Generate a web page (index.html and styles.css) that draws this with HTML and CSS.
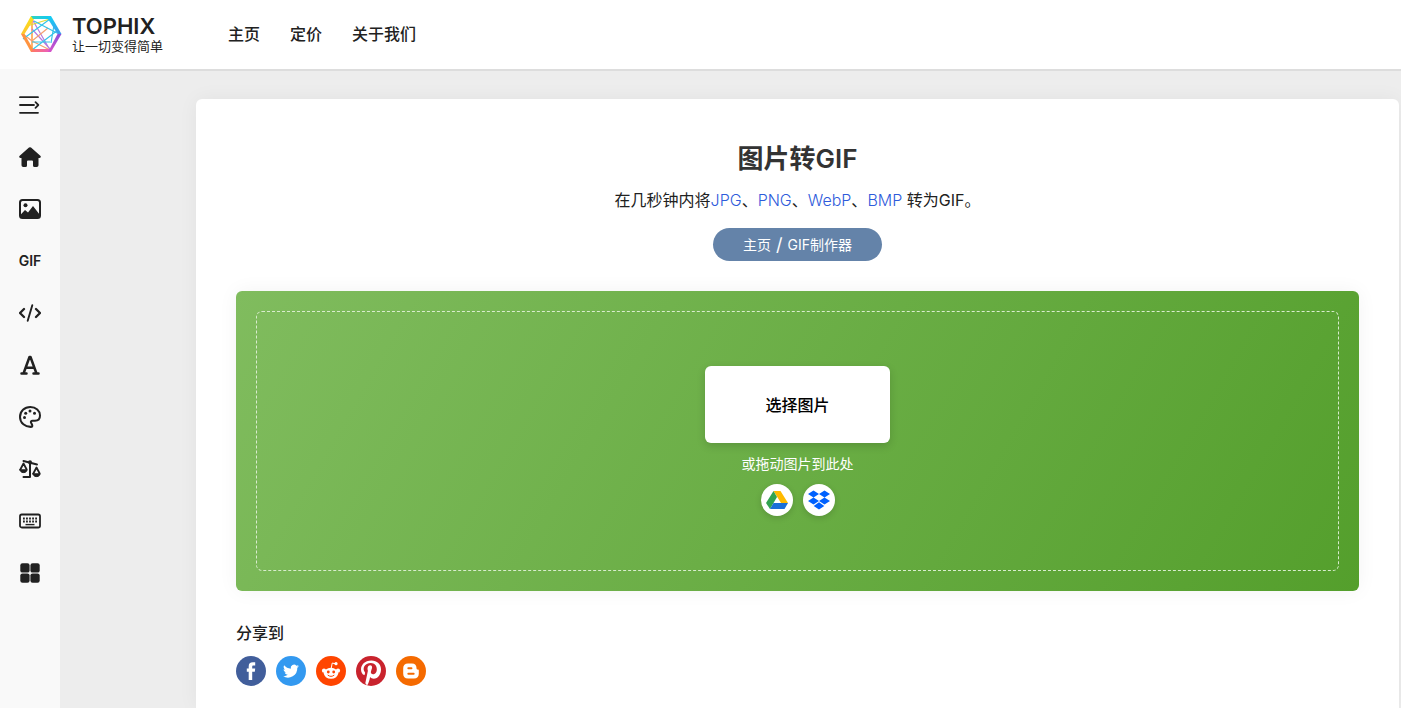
FILE: index.html
```html
<!DOCTYPE html>
<html lang="zh-CN">
  <head>
    <meta charset="utf-8">
    <meta name="viewport" content="width=device-width, initial-scale=1">
    <title>图片转GIF</title>
    <link rel="stylesheet" href="styles.css">
  </head>

  <body>
    <header class="header">
      <a class="brand" href="#">
        <svg class="brand-logo" viewBox="0 0 42 38" fill="none">
          <defs>
            <linearGradient id="g1" x1="0" y1="0" x2="1" y2="0"><stop stop-color="#2fd3c3"/><stop offset="1" stop-color="#12c8f4"/></linearGradient>
            <linearGradient id="g2" x1="0" y1="0" x2="0" y2="1"><stop stop-color="#12d0f4"/><stop offset="1" stop-color="#3f9cec"/></linearGradient>
            <linearGradient id="g3" x1="0" y1="0" x2="0" y2="1"><stop stop-color="#8a50dc"/><stop offset="1" stop-color="#d853c8"/></linearGradient>
            <linearGradient id="g4" x1="0" y1="0" x2="1" y2="0"><stop stop-color="#ff7a60"/><stop offset="1" stop-color="#e95bc5"/></linearGradient>
            <linearGradient id="g5" x1="0" y1="0" x2="0" y2="1"><stop stop-color="#f8e31c"/><stop offset="1" stop-color="#ffc42c"/></linearGradient>
          </defs>
          <g stroke-width="1.200">
            <path d="M12 4v30" stroke="#ff9b3f" stroke-width="1.500"/>
            <path d="M12 4l18 31M12 14l18 20" stroke="#b57be0"/>
            <path d="M7 11L30 4" stroke="#e2da35"/>
            <path d="M3 19L12 26l18 9M12 26l16-13" stroke="#f5a070"/>
            <path d="M30 4L3 24M38 15L12 35M34 10l-3 18M12 27h18M14 6l23 12" stroke="#36c4e8"/>
          </g>
          <path d="M11 1h3v3L4.500 19H1z" fill="url(#g5)"/>
          <path d="M1 19h3.500L13 34v3h-2z" fill="#ff9440"/>
          <path d="M11 37l1-3h18l1 3z" fill="url(#g4)"/>
          <path d="M11 1h20l-1 3H13z" fill="url(#g1)"/>
          <path d="M28 1h3l10.500 18h-4L28 4z" fill="url(#g2)"/>
          <path d="M37.500 19h4L31 37h-3z" fill="url(#g3)"/>
        </svg>
        <span class="brand-text">
          <span class="brand-name">TOPHIX</span>
          <span class="brand-slogan">让一切变得简单</span>
        </span>
      </a>
      <nav class="nav">
        <a href="#">主页</a>
        <a href="#">定价</a>
        <a href="#">关于我们</a>
      </nav>
    </header>

    <div class="layout">
      <aside class="sidebar">
        <button type="button" class="side-item" aria-label="展开菜单">
          <svg viewBox="0 0 22 22" fill="none" stroke="currentColor" stroke-width="1.800" stroke-linecap="round" stroke-linejoin="round"><path d="M1 3.200h18M1 18.800h18M1 11h14M16.500 8.200l2.800 2.800-2.800 2.800"/></svg>
        </button>
        <a class="side-item" href="#" aria-label="主页">
          <svg viewBox="0 0 22 22" fill="currentColor"><path d="M10 1.600a1.500 1.500 0 0 1 2 0l9.300 8.200c1 .9.500 2.200-.8 2.200h-1v7.200a1.800 1.800 0 0 1-1.800 1.800h-2.200a1.500 1.500 0 0 1-1.500-1.500V15.500a1 1 0 0 0-1-1H9a1 1 0 0 0-1 1v4A1.500 1.500 0 0 1 6.500 21H4.300a1.800 1.800 0 0 1-1.800-1.800V12h-1C.2 12-.3 10.700.7 9.800z"/></svg>
        </a>
        <a class="side-item" href="#" aria-label="图片">
          <svg viewBox="0 0 22 22" fill="currentColor"><rect x="1" y="2" width="20" height="18" rx="2.500" fill="none" stroke="currentColor" stroke-width="2"/><circle cx="6.500" cy="7.300" r="2"/><path d="M2 19v-2.700L6 12l3 2.500L14 8l6 7.800V19z"/></svg>
        </a>
        <a class="side-item side-label" href="#">GIF</a>
        <a class="side-item" href="#" aria-label="代码">
          <svg viewBox="0 0 22 22" fill="none" stroke="currentColor" stroke-width="2.300" stroke-linecap="round" stroke-linejoin="round"><path d="M5 7l-4 4 4 4M17 7l4 4-4 4"/><path d="M13.300 3.200L8.700 18.800" stroke-width="1.900"/></svg>
        </a>
        <a class="side-item" href="#" aria-label="字体">
          <svg viewBox="0 0 22 22" fill="none" stroke="currentColor" stroke-width="2.500" stroke-linecap="round" stroke-linejoin="round"><path d="M2.500 19.500h5M14.500 19.500h5M4.700 19L10.500 3h1l5.800 16M7 13.800h8"/></svg>
        </a>
        <a class="side-item" href="#" aria-label="颜色">
          <svg viewBox="0 0 22 22" fill="currentColor"><path d="M13 20.800C6 21.500 1 16.800 1 11S5.500 1 11.300 1C17 1 21 4.800 21 9.500c0 3.600-2.400 5.200-5 5.200h-2.500c-1.500 0-2 1.300-1.300 2.300.9 1.300 1.700 2.400.8 3.800z" fill="none" stroke="currentColor" stroke-width="2" stroke-linejoin="round"/><circle cx="5.500" cy="11.500" r="1.500"/><circle cx="6.700" cy="7.200" r="1.500"/><circle cx="11" cy="5" r="1.500"/><circle cx="15.500" cy="7.200" r="1.500"/></svg>
        </a>
        <a class="side-item" href="#" aria-label="对比">
          <svg viewBox="0 0 22 22" fill="none" stroke="currentColor" stroke-width="2" stroke-linecap="round" stroke-linejoin="round"><path d="M4.500 3L18 6.500M11 5v14M4.500 19H11"/><circle cx="11" cy="4.300" r="2" fill="currentColor" stroke="none"/><path d="M1.300 11.500L4.500 5.500l3.200 6M14.300 15.500l3.200-6 3.200 6" stroke-width="1.800"/><path d="M1 11.800h7c0 3.800-7 3.800-7 0zM14 15.800h7c0 3.800-7 3.800-7 0z" fill="currentColor" stroke-width="1"/></svg>
        </a>
        <a class="side-item" href="#" aria-label="键盘">
          <svg viewBox="0 0 22 22" fill="none" stroke="currentColor" stroke-width="1.800"><rect x="1" y="4.500" width="20" height="13" rx="1.800"/><path d="M4 8.500h14M4 11.500h14" stroke-dasharray="1.800 1.250"/><path d="M6.500 14.600h9" stroke-width="1.400"/></svg>
        </a>
        <a class="side-item" href="#" aria-label="更多工具">
          <svg viewBox="0 0 22 22" fill="currentColor"><rect x="1.300" y="1.300" width="9.300" height="9.300" rx="2.200"/><rect x="11.400" y="1.300" width="9.300" height="9.300" rx="2.200"/><rect x="1.300" y="11.400" width="9.300" height="9.300" rx="2.200"/><rect x="11.400" y="11.400" width="9.300" height="9.300" rx="2.200"/></svg>
        </a>
      </aside>

      <main class="main">
        <section class="card">
          <h1>图片转GIF</h1>
          <p class="intro">在几秒钟内将<a href="#">JPG</a>、<a href="#">PNG</a>、<a href="#">WebP</a>、<a href="#">BMP</a> 转为GIF。</p>
          <nav class="crumbs">
            <a href="#">主页</a>
            <span class="slash">/</span>
            <a href="#">GIF制作器</a>
          </nav>

          <div class="upload">
            <div class="dropzone">
              <button type="button" class="select-btn">选择图片</button>
              <p class="hint">或拖动图片到此处</p>
              <div class="clouds">
                <button type="button" class="cloud" aria-label="Google Drive">
                  <svg viewBox="0 0 22 20"><path d="M7.500 1h7L22 13h-7z" fill="#ffba00"/><path d="M7.500 1L11 7 4 19 0 13z" fill="#32a350"/><path d="M7.500 13H22l-3.500 6H4z" fill="#1b6fd8"/></svg>
                </button>
                <button type="button" class="cloud" aria-label="Dropbox">
                  <svg viewBox="0 0 22 20" fill="#0061fe"><path d="M5.500.5L11 4 5.500 7.500 0 4zM16.500.5L22 4l-5.500 3.500L11 4zM5.500 7.500L11 11l-5.500 3.500L0 11zM16.500 7.500L22 11l-5.500 3.500L11 11zM11 12.300l5.300 3.600L11 19.500l-5.300-3.600z"/></svg>
                </button>
              </div>
            </div>
          </div>

          <h2>分享到</h2>
          <div class="share">
            <a href="#" aria-label="Facebook">
              <svg viewBox="0 0 30 30"><circle cx="15" cy="15" r="15" fill="#415e9b"/><path d="M12.700 24v-8.200H10.800v-3.200h1.900v-2.100c0-2.900 1.300-4.200 4.200-4.200h2.300v3.200h-1.600c-1.100 0-1.400.5-1.400 1.400v1.700h3l-.4 3.200h-2.600V24z" fill="#fff"/></svg>
            </a>
            <a href="#" aria-label="Twitter">
              <svg viewBox="0 0 30 30"><circle cx="15" cy="15" r="15" fill="#3399f0"/><path d="M23 10.200c-.6.300-1.200.4-1.900.5.700-.4 1.200-1 1.400-1.800-.6.400-1.300.6-2.100.8a3.300 3.300 0 0 0-5.600 3c-2.700-.1-5.100-1.400-6.700-3.400-.9 1.600-.4 3.400 1 4.300-.5 0-1-.1-1.500-.4 0 1.600 1.100 2.900 2.600 3.200-.5.100-.9.200-1.500.1.400 1.300 1.600 2.200 3.100 2.200-1.400 1.100-3 1.600-4.800 1.400a9.300 9.300 0 0 0 14.300-8.300c.7-.4 1.300-1 1.700-1.600z" fill="#fff"/></svg>
            </a>
            <a href="#" aria-label="Reddit">
              <svg viewBox="0 0 30 30"><circle cx="15" cy="15" r="15" fill="#ff4500"/><g fill="#fff"><ellipse cx="15" cy="17.300" rx="7.200" ry="5.500"/><circle cx="8" cy="14.700" r="2.100"/><circle cx="22" cy="14.700" r="2.100"/><circle cx="20" cy="7.700" r="1.600"/></g><path d="M15.300 12l.9-4.900 3.800.7" fill="none" stroke="#fff"/><circle cx="12.300" cy="16" r="1.400" fill="#ff4500"/><circle cx="17.700" cy="16" r="1.400" fill="#ff4500"/><path d="M12 19.300c1.700 1.500 4.300 1.500 6 0" fill="none" stroke="#ff4500" stroke-linecap="round"/></svg>
            </a>
            <a href="#" aria-label="Pinterest">
              <svg viewBox="0 0 30 30"><circle cx="15" cy="15" r="15" fill="#c9232d"/><path d="M15.500 4.500C8.500 4.500 5 9 5 13.500c0 2.200 1.100 4.700 3 5.600.4.100.5.100.6-.3l.5-1.900-.2-.6c-2.900-3.700-.5-9.300 6-9.300 7.400 0 7.700 11.300 2.100 11.300-1.400 0-2.400-1.100-2.100-2.500.4-1.800 1.200-3.400 1.200-4.600 0-3.100-4.600-2.600-4.600 1.400 0 1.200.4 2.100.4 2.100L9.300 27.200l1.800 2.300c1.800-2.400 2.400-5.600 3-8.400.8 1.200 2.200 1.700 3.500 1.700 4.800 0 7.400-4.700 7.400-9.500 0-5.200-4-8.800-9.500-8.800z" fill="#fff"/></svg>
            </a>
            <a href="#" aria-label="Blogger">
              <svg viewBox="0 0 30 30"><circle cx="15" cy="15" r="15" fill="#f56a00"/><path d="M12 7.500h4c3 0 4.500 2 4.500 4.400 0 1.300.5 1.600 1.300 1.600.7 0 1 .4 1 1v3.300c0 3-1.700 4.700-4.800 4.700h-6c-3.200 0-4.800-1.700-4.800-4.700v-5.600c0-3 1.800-4.700 4.800-4.700z" fill="#fff"/><path d="M12.300 12.300h3.200M12.300 17.800h5.400" stroke="#f56a00" stroke-width="1.900" stroke-linecap="round"/></svg>
            </a>
          </div>
        </section>
      </main>
    </div>
  </body>
</html>
```

FILE: styles.css
```css
* {
  box-sizing: border-box;
  margin: 0;
  padding: 0;
}

body {
  display: flex;
  flex-direction: column;
  min-height: 100vh;
  background: #ededed;
  color: #212121;
  font-family: Inter, "Noto Sans CJK SC", sans-serif;
  font-size: 16px;
  line-height: 24px;
}

a {
  color: inherit;
  text-decoration: none;
}

button {
  border: 0;
  background: none;
  color: inherit;
  font: inherit;
  cursor: pointer;
}

svg {
  display: block;
}

/* header */
.header {
  display: flex;
  align-items: center;
  gap: 65px;
  height: 69px;
  padding: 0 20px 2px;
  background: #fff;
}

.brand {
  display: flex;
  align-items: center;
  gap: 10px;
}

.brand-logo {
  width: 42px;
  height: 38px;
}

.brand-text {
  display: flex;
  flex-direction: column;
  padding-top: 4px;
}

.brand-name {
  font-size: 22px;
  font-weight: 600;
  line-height: 20px;
}

.brand-slogan {
  font-size: 13px;
  line-height: 20px;
}

.nav {
  display: flex;
  gap: 30px;
  font-weight: 500;
}

/* page body */
.layout {
  display: flex;
  flex: 1;
}

.sidebar {
  width: 60px;
  padding-top: 10px;
  background: #f9f9f9;
}

.side-item {
  display: flex;
  align-items: center;
  justify-content: center;
  width: 60px;
  height: 52px;
}

.side-item svg {
  width: 22px;
  height: 22px;
}

.side-label {
  font-size: 14px;
  font-weight: 600;
}

.main {
  display: flex;
  flex: 1;
  padding: 28px 2px 0 136px;
  border-top: 2px solid #ddd;
}

.card {
  flex: 1;
  padding: 40px 40px 20px;
  border-radius: 6px 6px 0 0;
  background: #fff;
  box-shadow: 0 0 20px rgba(0, 0, 0, 0.05);
  text-align: center;
}

h1 {
  margin-bottom: 10px;
  color: #333;
  font-size: 26px;
  font-weight: 600;
  line-height: 39px;
}

.intro {
  margin-bottom: 16px;
}

.intro a {
  color: #2e5bdb;
  font-weight: 300;
}

.crumbs {
  display: inline-flex;
  align-items: center;
  gap: 5px;
  height: 33px;
  padding: 0 30px;
  border-radius: 17px;
  background: #6483a9;
  color: #fff;
  font-size: 14px;
  vertical-align: top;
}

.slash {
  font-size: 18px;
}

/* upload area */
.upload {
  margin: 30px 0;
  padding: 20px;
  border-radius: 6px;
  background: linear-gradient(120deg, #80bc5e, #549f2c);
  box-shadow: 0 0 20px rgba(0, 0, 0, 0.05);
}

.dropzone {
  display: flex;
  flex-direction: column;
  align-items: center;
  justify-content: center;
  gap: 10px;
  min-height: 260px;
  border: 1px dashed #d9ecce;
  border-radius: 6px;
}

.select-btn {
  min-width: 185px;
  height: 77px;
  border-radius: 6px;
  background: #fff;
  box-shadow: 0 3px 8px rgba(0, 0, 0, 0.15);
  color: #000;
  font-weight: 500;
}

.hint {
  color: #fff;
  font-size: 14px;
  line-height: 21px;
}

.clouds {
  display: flex;
  gap: 10px;
}

.cloud {
  display: flex;
  align-items: center;
  justify-content: center;
  width: 32px;
  height: 32px;
  border-radius: 50%;
  background: #fff;
  box-shadow: 0 2px 6px rgba(0, 0, 0, 0.15);
}

.cloud svg {
  width: 22px;
  height: 20px;
}

/* share links */
h2 {
  margin-bottom: 11px;
  font-size: 16px;
  font-weight: 500;
  text-align: left;
}

.share {
  display: flex;
  gap: 10px;
}

.share svg {
  width: 30px;
  height: 30px;
}
```
